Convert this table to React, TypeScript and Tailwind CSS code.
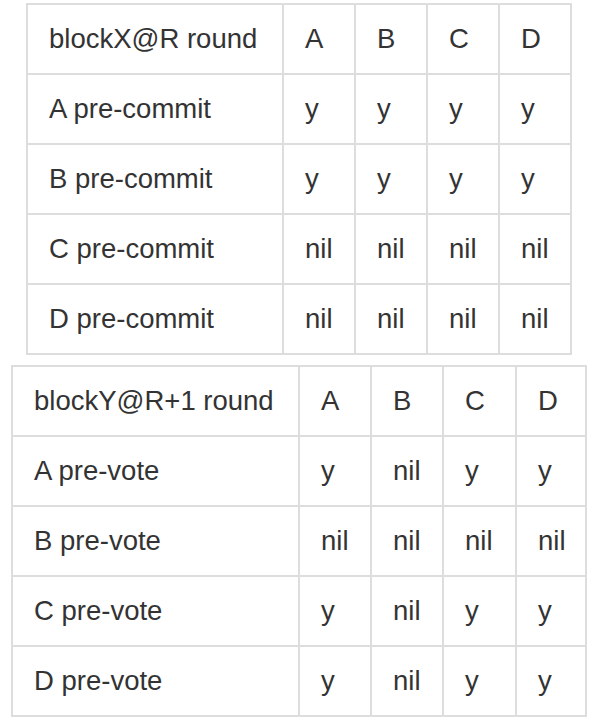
import React from 'react'

type TableProps = {
  title: string
  rows: [string, string[]][]
  cols: string[]
  widths: string
  className: string
}

function VoteTable({ title, rows, cols, widths, className }: TableProps) {
  const cell = 'flex items-center h-[70px] pl-[21px] border-r-2 border-b-2 border-[#dddddd] whitespace-nowrap'
  return (
    <div className={`grid border-l-2 border-t-2 border-[#dddddd] w-max ${widths} ${className}`}>
      <div className={cell}>{title}</div>
      {cols.map((c) => (
        <div key={c} className={cell}>{c}</div>
      ))}
      {rows.map(([label, vals]) => (
        <React.Fragment key={label}>
          <div className={cell}>{label}</div>
          {vals.map((v, i) => (
            <div key={i} className={cell}>{v}</div>
          ))}
        </React.Fragment>
      ))}
    </div>
  )
}

export default function App() {
  const cols = ['A', 'B', 'C', 'D']
  return (
    <div
      className="w-[594px] h-[721px] bg-white text-[#333333] text-[27.5px] pt-[3px] overflow-hidden"
      style={{ fontFamily: '"Liberation Sans", Arial, sans-serif' }}
    >
      <VoteTable
        title="blockX@R round"
        cols={cols}
        widths="grid-cols-[256px_72px_72px_72px_72px]"
        className="ml-[26px]"
        rows={[
          ['A pre-commit', ['y', 'y', 'y', 'y']],
          ['B pre-commit', ['y', 'y', 'y', 'y']],
          ['C pre-commit', ['nil', 'nil', 'nil', 'nil']],
          ['D pre-commit', ['nil', 'nil', 'nil', 'nil']],
        ]}
      />
      <VoteTable
        title="blockY@R+1 round"
        cols={cols}
        widths="grid-cols-[287px_72px_72px_73px_70px]"
        className="ml-[11px] mt-[10px]"
        rows={[
          ['A pre-vote', ['y', 'nil', 'y', 'y']],
          ['B pre-vote', ['nil', 'nil', 'nil', 'nil']],
          ['C pre-vote', ['y', 'nil', 'y', 'y']],
          ['D pre-vote', ['y', 'nil', 'y', 'y']],
        ]}
      />
    </div>
  )
}
